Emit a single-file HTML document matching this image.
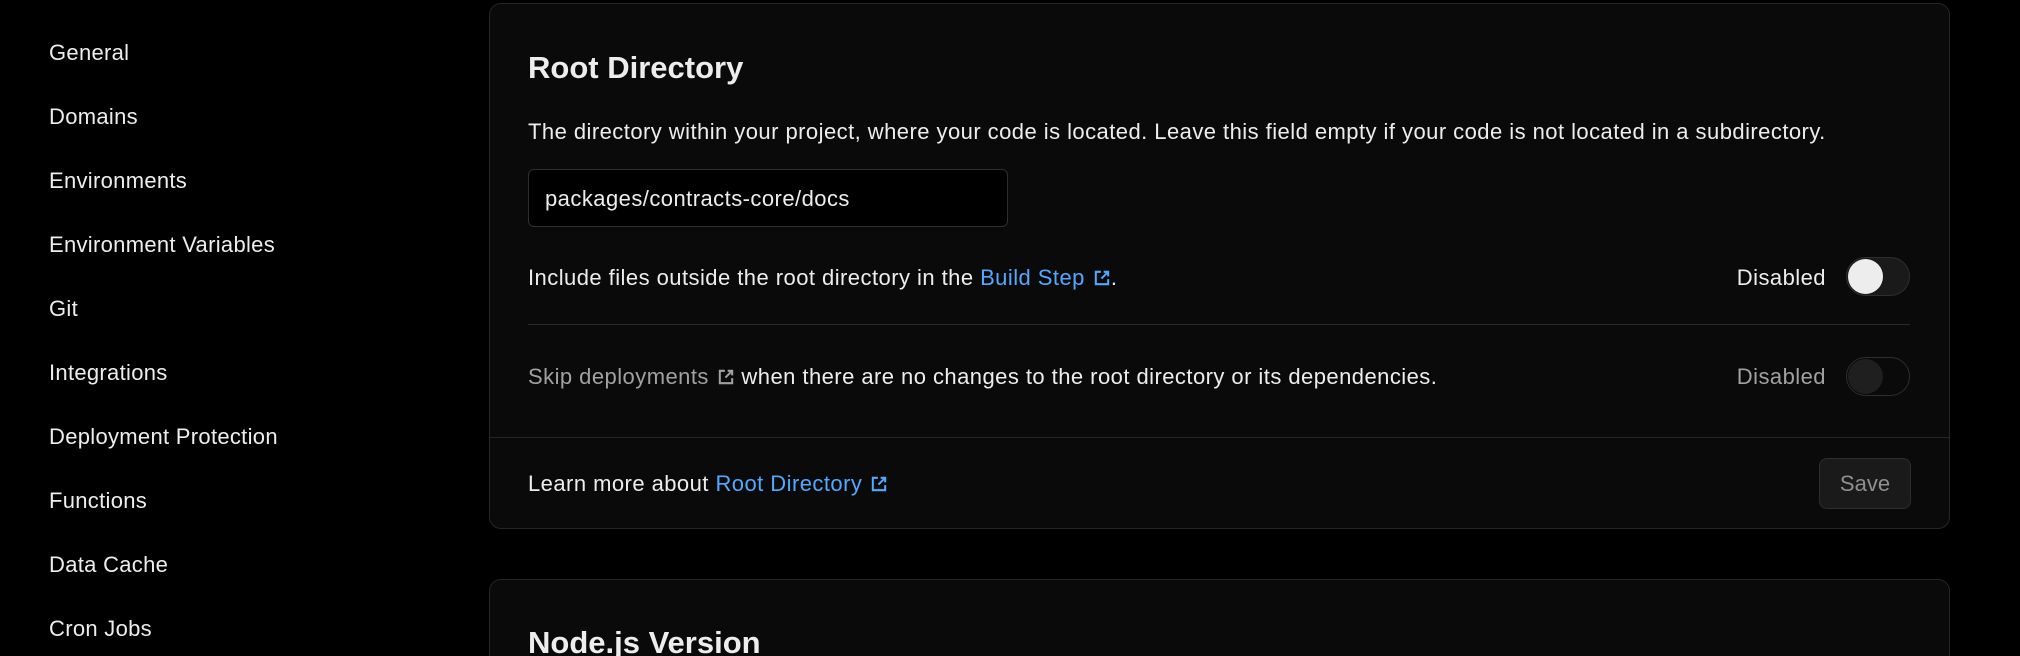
<!DOCTYPE html>
<html><head><meta charset="utf-8"><style>
*{box-sizing:border-box;margin:0;padding:0}
html,body{width:2020px;height:656px;overflow:hidden}
body{background:#000;font-family:"Liberation Sans",sans-serif;color:#ededed;position:relative}
.nav{position:absolute;left:49px;font-size:22px;letter-spacing:0.3px;color:#ededed;line-height:28px}
.card{position:absolute;left:489px;width:1461px;background:#0a0a0a;border:1px solid #262626;border-radius:12px}
.a{position:absolute;white-space:nowrap;font-size:22px;letter-spacing:0.45px;line-height:28px}
.link{color:#52a8ff}
.ic{display:inline-block;vertical-align:-2px;margin-left:8px}
.tog{position:absolute;width:64px;height:39px;border-radius:20px;border:1px solid #2e2e2e;background:#1a1a1a}
.knob{position:absolute;left:1px;top:1px;width:35px;height:35px;border-radius:50%}
.h{position:absolute;white-space:nowrap;font-size:31px;line-height:36px;font-weight:bold;color:#ededed}
</style></head><body>
<div class="nav" style="top:39px">General</div>
<div class="nav" style="top:103px">Domains</div>
<div class="nav" style="top:167px">Environments</div>
<div class="nav" style="top:231px">Environment Variables</div>
<div class="nav" style="top:295px">Git</div>
<div class="nav" style="top:359px">Integrations</div>
<div class="nav" style="top:423px">Deployment Protection</div>
<div class="nav" style="top:487px">Functions</div>
<div class="nav" style="top:551px">Data Cache</div>
<div class="nav" style="top:615px">Cron Jobs</div>

<div class="card" style="top:3px;height:526px"></div>
<div class="h" style="left:528px;top:50px">Root Directory</div>
<div class="a" style="left:528px;top:118px">The directory within your project, where your code is located. Leave this field empty if your code is not located in a subdirectory.</div>
<div style="position:absolute;left:528px;top:169px;width:480px;height:58px;background:#000;border:1px solid #2e2e2e;border-radius:6px"></div>
<div class="a" style="left:545px;top:185px">packages/contracts-core/docs</div>
<div class="a" style="left:528px;top:264px">Include files outside the root directory in the <span class="link">Build Step<svg class="ic" width="18" height="18" viewBox="0 0 16 16" fill="none" stroke="#52a8ff" stroke-width="1.8"><path d="M7 2.5H2.5v11h11V9"/><path d="M9.5 2.5h4v4M13.5 2.5 7.5 8.5"/></svg></span>.</div>
<div class="a" style="right:194px;top:264px">Disabled</div>
<div class="tog" style="left:1846px;top:257px"><div class="knob" style="background:#ededed"></div></div>
<div style="position:absolute;left:528px;top:324px;width:1382px;height:1px;background:#2a2a2a"></div>
<div class="a" style="left:528px;top:363px"><span style="color:#a1a1a1">Skip deployments<svg class="ic" width="18" height="18" viewBox="0 0 16 16" fill="none" stroke="#a1a1a1" stroke-width="1.8"><path d="M7 2.5H2.5v11h11V9"/><path d="M9.5 2.5h4v4M13.5 2.5 7.5 8.5"/></svg></span> when there are no changes to the root directory or its dependencies.</div>
<div class="a" style="right:194px;top:363px;color:#a1a1a1">Disabled</div>
<div class="tog" style="left:1846px;top:357px;background:#0a0a0a"><div class="knob" style="background:#1f1f1f"></div></div>
<div style="position:absolute;left:490px;top:437px;width:1459px;height:1px;background:#262626"></div>
<div class="a" style="left:528px;top:470px">Learn more about <span class="link">Root Directory<svg class="ic" width="18" height="18" viewBox="0 0 16 16" fill="none" stroke="#52a8ff" stroke-width="1.8"><path d="M7 2.5H2.5v11h11V9"/><path d="M9.5 2.5h4v4M13.5 2.5 7.5 8.5"/></svg></span></div>
<div style="position:absolute;left:1819px;top:458px;width:92px;height:51px;background:#1a1a1a;border:1px solid #2e2e2e;border-radius:8px;color:#8f8f8f;font-size:22px;line-height:49px;text-align:center">Save</div>

<div class="card" style="top:579px;height:100px"></div>
<div class="h" style="left:528px;top:625px">Node.js Version</div>
</body></html>
